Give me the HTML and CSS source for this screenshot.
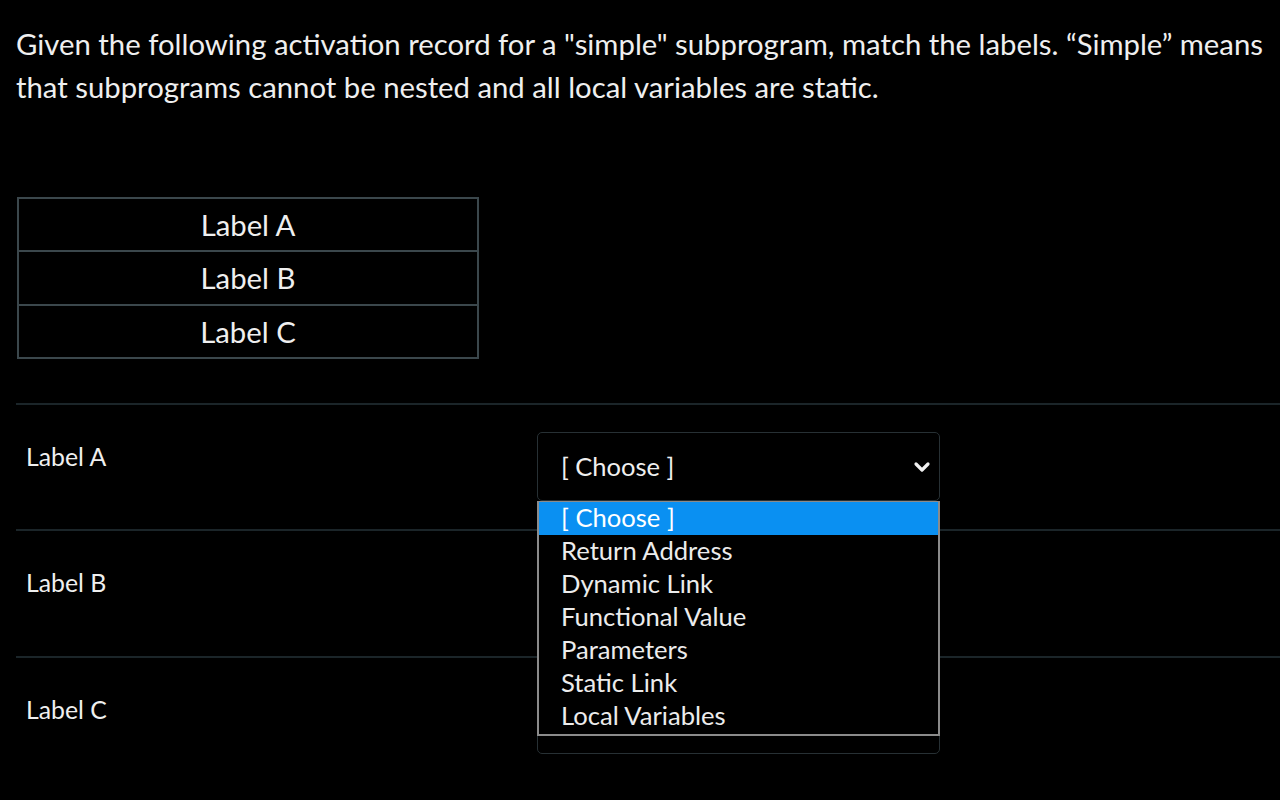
FILE: index.html
```html
<!DOCTYPE html>
<html>
<head>
<meta charset="utf-8">
<link rel="stylesheet" href="styles.css">
</head>
<body>
<div class="page">
  <p class="question">Given the following activation record for a "simple" subprogram, match the labels. “Simple” means that subprograms cannot be nested and all local variables are static.</p>
  <table class="record">
    <tr><td>Label A</td></tr>
    <tr><td>Label B</td></tr>
    <tr><td>Label C</td></tr>
  </table>
  <div class="matches">
    <div class="match-row">
      <div class="match-label">Label A</div>
      <div class="select-wrap">
        <div class="select">
          <span>[ Choose ]</span>
          <svg class="chev" width="18" height="12" viewBox="0 0 18 12"><path d="M3 3 L9 9 L15 3" fill="none" stroke="#f0f0f0" stroke-width="3.2" stroke-linecap="round" stroke-linejoin="round"/></svg>
        </div>
        <ul class="dropdown">
          <li class="active">[ Choose ]</li>
          <li>Return Address</li>
          <li>Dynamic Link</li>
          <li>Functional Value</li>
          <li>Parameters</li>
          <li>Static Link</li>
          <li>Local Variables</li>
        </ul>
      </div>
    </div>
    <div class="match-row">
      <div class="match-label">Label B</div>
      <div class="select-wrap">
        <div class="select"><span class="covered">[ Choose ]</span></div>
      </div>
    </div>
    <div class="match-row">
      <div class="match-label">Label C</div>
      <div class="select-wrap">
        <div class="select"><span class="covered">[ Choose ]</span></div>
      </div>
    </div>
  </div>
</div>
</body>
</html>
```
FILE: styles.css
```css
html, body {
  margin: 0;
  padding: 0;
  background: #000;
}
body {
  font-family: Lato, "Open Sans", sans-serif;
  color: #efefef;
  overflow: hidden;
  height: 800px;
}
.page {
  padding-left: 16px;
}
.question {
  margin: 0;
  padding-top: 22px;
  font-size: 29.3px;
  line-height: 43px;
  padding-right: 0;
}
.record {
  margin-top: 89px;
  border-collapse: collapse;
  width: 462px;
  margin-left: 1px;
}
.record td {
  border: 2px solid #3b474c;
  height: 51.3px;
  padding: 0;
  text-align: center;
  font-size: 29.3px;
  line-height: 51px;
}
.matches {
  margin-top: 44px;
}
.match-row {
  display: flex;
  border-top: 2px solid #1b2529;
  height: 126.5px;
  padding-top: 27px;
  box-sizing: border-box;
}
.match-label {
  width: 521px;
  box-sizing: border-box;
  padding-left: 10px;
  font-size: 24.8px;
  line-height: 50px;
}
.select-wrap {
  position: relative;
}
.select {
  width: 403px;
  height: 69px;
  border: 1.5px solid #273034;
  border-radius: 5px;
  display: flex;
  align-items: center;
  justify-content: space-between;
  padding: 0 8px 0 23px;
  box-sizing: border-box;
  font-size: 25.5px;
  color: #efefef;
}
.chev {
  margin-top: 2px;
}
.dropdown {
  position: absolute;
  left: 0;
  top: 69px;
  width: 403px;
  box-sizing: border-box;
  margin: 0;
  padding: 0 0 1px 0;
  list-style: none;
  background: #000;
  border: 2px solid #8b8b8b;
  border-top-width: 1px;
  z-index: 5;
}
.dropdown li {
  height: 33px;
  line-height: 31px;
  font-size: 25.6px;
  padding-left: 22px;
  color: #ececec;
}
.dropdown li.active {
  background: #0a90f2;
  color: #fff;
}
```
